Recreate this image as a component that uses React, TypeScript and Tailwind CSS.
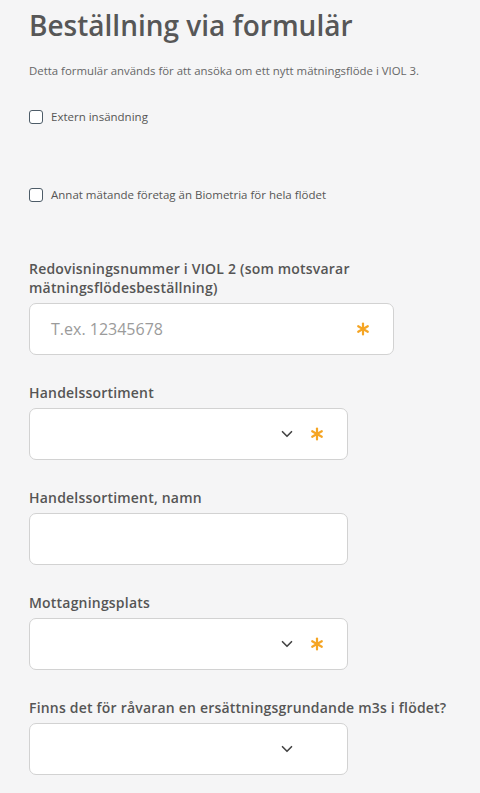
import { ChevronDown } from "lucide-react";

const font = { fontFamily: '"Open Sans", "Noto Sans", sans-serif' };

function Asterisk() {
  return (
    <svg width="14" height="14" viewBox="0 0 14 14" className="shrink-0">
      <g stroke="#f5a524" strokeWidth="2.2" strokeLinecap="round">
        <line x1="7" y1="1.5" x2="7" y2="12.5" />
        <line x1="2.2" y1="4.2" x2="11.8" y2="9.8" />
        <line x1="2.2" y1="9.8" x2="11.8" y2="4.2" />
      </g>
    </svg>
  );
}

function Checkbox({ label }: { label: string }) {
  return (
    <label className="flex items-center gap-2 text-[11.5px] text-[#555]">
      <span className="w-[14px] h-[14px] rounded-[3px] border-[1.5px] border-[#4d5c68] bg-white" />
      {label}
    </label>
  );
}

function Field({
  label,
  wide,
  select,
  required,
  placeholder,
}: {
  label: string;
  wide?: boolean;
  select?: boolean;
  required?: boolean;
  placeholder?: string;
}) {
  return (
    <div className="flex flex-col gap-[6px]">
      <p className="text-[14px] leading-[19px] font-semibold text-[#555] tracking-[0.2px]">
        {label}
      </p>
      <div
        className={`h-[52px] ${wide ? "w-[365px]" : "w-[319px]"} bg-white border border-[#d2d2d2] rounded-[7px] flex items-center pl-[21px] pr-[23px]`}
      >
        <span className="flex-1 text-[16px] text-[#9b9b9b]">{placeholder}</span>
        {select && (
          <ChevronDown size={18} strokeWidth={2.2} className="text-[#444] mr-[14px]" />
        )}
        {required && <Asterisk />}
        {select && !required && <span className="w-[14px]" />}
      </div>
    </div>
  );
}

export default function App() {
  return (
    <div className="min-h-[793px] bg-[#f5f5f6] px-[29px] pt-[6px]" style={font}>
      <h1 className="text-[28px] leading-[38px] font-semibold text-[#575757]">
        Beställning via formulär
      </h1>
      <p className="mt-[18px] text-[11.4px] text-[#666]">
        Detta formulär används för att ansöka om ett nytt mätningsflöde i VIOL 3.
      </p>
      <div className="mt-[29px]">
        <Checkbox label="Extern insändning" />
      </div>
      <div className="mt-[61px]">
        <Checkbox label="Annat mätande företag än Biometria för hela flödet" />
      </div>
      <div className="mt-[55px] flex flex-col gap-[28px]">
        <Field
          label="Redovisningsnummer i VIOL 2 (som motsvarar mätningsflödesbeställning)"
          wide
          required
          placeholder="T.ex. 12345678"
        />
        <Field label="Handelssortiment" select required />
        <Field label="Handelssortiment, namn" />
        <Field label="Mottagningsplats" select required />
        <Field label="Finns det för råvaran en ersättningsgrundande m3s i flödet?" select />
      </div>
    </div>
  );
}
